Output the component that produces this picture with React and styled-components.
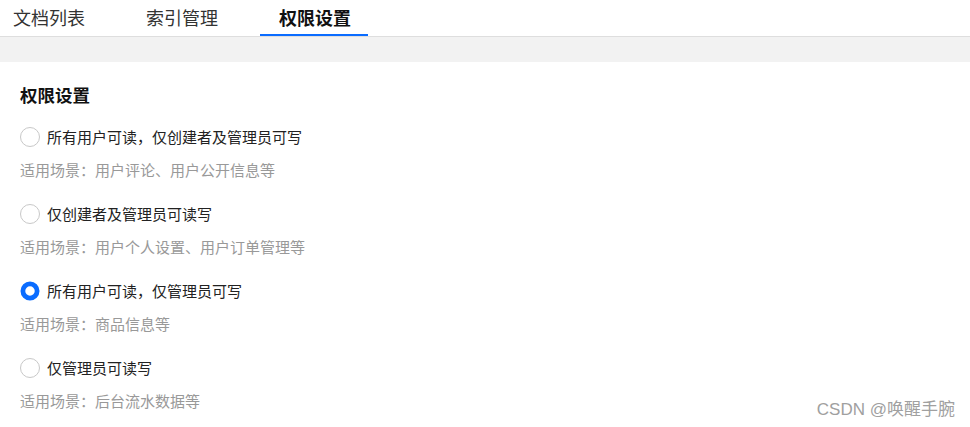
import React, { useState } from "react";
import styled, { createGlobalStyle } from "styled-components";

const Global = createGlobalStyle`
  html, body { margin: 0; padding: 0; background: #fff; }
  body { font-family: "Noto Sans CJK SC", "Microsoft YaHei", "Noto Sans", sans-serif; }
  * { box-sizing: border-box; }
`;

const Page = styled.div`
  position: relative;
  width: 970px;
  height: 427px;
  overflow: hidden;
  background: #fff;
`;

const TabBar = styled.div`
  display: flex;
  height: 37px;
  padding-left: 13px;
  border-bottom: 1px solid #dedede;
`;

const Tab = styled.div`
  position: relative;
  height: 36px;
  margin-right: 61px;
  display: flex;
  align-items: center;
  font-size: 18px;
  line-height: 18px;
  padding-bottom: 2px;
  color: ${(p) => (p.$active ? "#111" : "#333")};
  font-weight: ${(p) => (p.$active ? 700 : 400)};
  cursor: pointer;
  &::after {
    content: "";
    display: ${(p) => (p.$active ? "block" : "none")};
    position: absolute;
    left: -19px;
    right: -17px;
    bottom: 0;
    height: 2px;
    background: #0a6cff;
  }
`;

const Band = styled.div`
  height: 25px;
  background: #f2f2f2;
`;

const Content = styled.div`
  padding: 21px 20px 0;
`;

const Heading = styled.div`
  font-size: 17.5px;
  line-height: 24px;
  font-weight: 700;
  color: #111;
  margin-bottom: 20px;
`;

const Option = styled.div`
  display: flex;
  flex-direction: column;
  margin-bottom: 24px;
`;

const Row = styled.label`
  display: flex;
  align-items: center;
  gap: 7px;
  height: 20px;
  cursor: pointer;
`;

const Circle = styled.span`
  width: 20px;
  height: 20px;
  border-radius: 50%;
  flex: none;
  border: ${(p) => (p.$checked ? "5px solid #0a6cff" : "1px solid #c8c8c8")};
  background: #fff;
  transform: ${(p) => (p.$checked ? "scale(0.95)" : "none")};
`;

const Label = styled.span`
  font-size: 15px;
  line-height: 20px;
  color: #222;
`;

const Desc = styled.div`
  margin-top: 13px;
  font-size: 15px;
  line-height: 20px;
  color: #999;
`;

const Watermark = styled.div`
  position: absolute;
  right: 15px;
  bottom: 7px;
  font-size: 17px;
  line-height: 20px;
  color: #a0a0a0;
  font-family: "Liberation Sans", "Noto Sans CJK SC", sans-serif;
`;

const options = [
  { label: "所有用户可读，仅创建者及管理员可写", desc: "适用场景：用户评论、用户公开信息等" },
  { label: "仅创建者及管理员可读写", desc: "适用场景：用户个人设置、用户订单管理等" },
  { label: "所有用户可读，仅管理员可写", desc: "适用场景：商品信息等" },
  { label: "仅管理员可读写", desc: "适用场景：后台流水数据等" },
];

export default function App() {
  const [sel, setSel] = useState(2);
  const tabs = ["文档列表", "索引管理", "权限设置"];
  return (
    <Page>
      <Global />
      <TabBar>
        {tabs.map((t, i) => (
          <Tab key={t} $active={i === 2}>{t}</Tab>
        ))}
      </TabBar>
      <Band />
      <Content>
        <Heading>权限设置</Heading>
        {options.map((o, i) => (
          <Option key={o.label}>
            <Row onClick={() => setSel(i)}>
              <Circle $checked={sel === i} />
              <Label>{o.label}</Label>
            </Row>
            <Desc>{o.desc}</Desc>
          </Option>
        ))}
      </Content>
      <Watermark>CSDN @唤醒手腕</Watermark>
    </Page>
  );
}
